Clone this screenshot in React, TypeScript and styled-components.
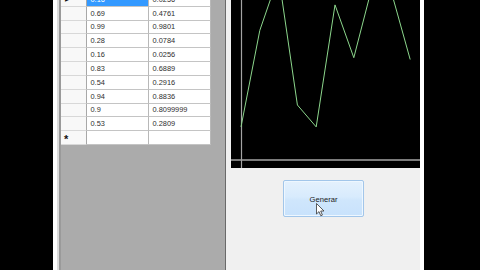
import React from "react";
import styled, { createGlobalStyle } from "styled-components";

const GlobalStyle = createGlobalStyle`
  html, body {
    margin: 0;
    padding: 0;
    background: #000;
  }
`;

const ROW_H = 13.83;

const rows: { a: string; b: string; selected?: boolean }[] = [
  { a: "0.16", b: "0.0256", selected: true },
  { a: "0.69", b: "0.4761" },
  { a: "0.99", b: "0.9801" },
  { a: "0.28", b: "0.0784" },
  { a: "0.16", b: "0.0256" },
  { a: "0.83", b: "0.6889" },
  { a: "0.54", b: "0.2916" },
  { a: "0.94", b: "0.8836" },
  { a: "0.9", b: "0.8099999" },
  { a: "0.53", b: "0.2809" },
];

const values = rows.map((r) => parseFloat(r.a));

const Screen = styled.div`
  width: 480px;
  height: 270px;
  overflow: hidden;
  display: flex;
  padding-left: 53px;
  box-sizing: border-box;
  background: #000;
  font-family: "Liberation Sans", Arial, sans-serif;
`;

const FrameEdge = styled.div`
  width: 8px;
  height: 100%;
  background: linear-gradient(
    to right,
    #ffffff 0,
    #ffffff 4px,
    #dcdcdc 4px,
    #dcdcdc 6px,
    #9a9a9a 6px,
    #9a9a9a 8px
  );
`;

const GridView = styled.div`
  width: 165px;
  height: 100%;
  box-sizing: border-box;
  background: #ababab;
  border-right: 1px solid #6a6a6a;
  overflow: hidden;
`;

const Table = styled.div`
  margin-top: -7.13px;
  display: flex;
  flex-direction: column;
`;

const Row = styled.div`
  display: flex;
  height: ${ROW_H}px;
`;

const HeaderCell = styled.div<{ $big?: boolean }>`
  width: 26px;
  box-sizing: border-box;
  background: #f8f8f8;
  border-right: 1px solid #a8a8a8;
  border-bottom: 1px solid #d8d8d8;
  display: flex;
  align-items: center;
  padding-left: ${(p) => (p.$big ? "3px" : "3.5px")};
  font-size: ${(p) => (p.$big ? "11px" : "7px")};
  font-weight: ${(p) => (p.$big ? "bold" : "normal")};
  color: #111;
  padding-top: ${(p) => (p.$big ? "3px" : "0")};
`;

const Cell = styled.div<{ $selected?: boolean }>`
  width: 62px;
  box-sizing: border-box;
  background: ${(p) => (p.$selected ? "#3399ff" : "#ffffff")};
  color: ${(p) => (p.$selected ? "#ffffff" : "#2e2e2e")};
  border-right: 1px solid #b8b8b8;
  border-bottom: 1px solid #c4c4c4;
  display: flex;
  align-items: center;
  padding-left: 3.5px;
  font-size: 7.4px;
  white-space: nowrap;
`;

const Panel = styled.div`
  width: 198px;
  height: 100%;
  box-sizing: border-box;
  background: #f0f0f0;
  border-right: 4px solid #ffffff;
  padding-left: 5px;
  display: flex;
  flex-direction: column;
`;

const Chart = styled.div`
  width: 189px;
  height: 168px;
  background: #000;
  overflow: hidden;
`;

const Button = styled.div`
  position: relative;
  margin-top: 12px;
  margin-left: 52px;
  width: 81px;
  height: 37px;
  box-sizing: border-box;
  border: 1px solid #a2c6ea;
  border-radius: 2px;
  background: linear-gradient(to bottom, #e4f1fd 0%, #d8ebfd 45%, #cfe6fc 55%, #c8e2fc 100%);
  box-shadow: inset 0 0 0 1px #eef7ff;
  display: flex;
  align-items: center;
  justify-content: center;
  font-size: 7.6px;
  color: #1a1a1a;
  padding-top: 1px;
`;

const Cursor = styled.svg`
  position: absolute;
  left: 32px;
  top: 22px;
`;

const Rest = styled.div`
  flex: 1;
  background: #000;
`;

function LineChart() {
  const x0 = 10;
  const step = 18.8;
  const pts = values
    .map((v, i) => `${(x0 + i * step).toFixed(1)},${(156 - v * 182).toFixed(1)}`)
    .join(" ");
  return (
    <svg width="189" height="168" viewBox="0 0 189 168">
      <line x1="0" y1="160" x2="189" y2="160" stroke="#a4a4a4" strokeWidth="1.5" />
      <line x1="10.5" y1="0" x2="10.5" y2="168" stroke="#a4a4a4" strokeWidth="1.2" />
      <polyline points={pts} fill="none" stroke="#8cd68c" strokeWidth="1" />
    </svg>
  );
}

export default function App() {
  return (
    <>
      <GlobalStyle />
      <Screen>
        <FrameEdge />
        <GridView>
          <Table>
            {rows.map((r, i) => (
              <Row key={i}>
                <HeaderCell>{i === 0 ? "▶" : ""}</HeaderCell>
                <Cell $selected={r.selected}>{r.a}</Cell>
                <Cell>{r.b}</Cell>
              </Row>
            ))}
            <Row>
              <HeaderCell $big>*</HeaderCell>
              <Cell />
              <Cell />
            </Row>
          </Table>
        </GridView>
        <Panel>
          <Chart>
            <LineChart />
          </Chart>
          <Button>
            Generar
            <Cursor width="10" height="15" viewBox="0 0 10 15">
              <path
                d="M0.5 0.5 L0.5 11 L3 8.6 L4.8 12.8 L6.4 12.1 L4.7 8 L8 8 Z"
                fill="#ffffff"
                stroke="#333"
                strokeWidth="0.8"
                strokeLinejoin="round"
              />
            </Cursor>
          </Button>
        </Panel>
        <Rest />
      </Screen>
    </>
  );
}
